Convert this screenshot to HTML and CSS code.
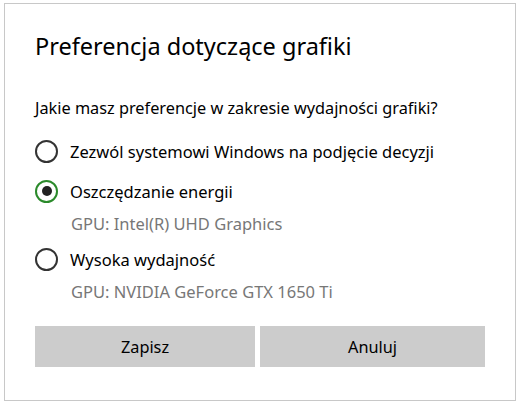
FILE: index.html
```html
<!DOCTYPE html>
<html lang="pl">
<head>
  <meta charset="UTF-8" />
  <title>Preferencja dotyczące grafiki</title>
  <link rel="stylesheet" href="styles.css">
</head>
<body>

<div class="dialog">
  <h2>Preferencja dotyczące grafiki</h2>
  <p class="question">Jakie masz preferencje w zakresie wydajności grafiki?</p>

  <div class="options">
    <label class="option">
      <span class="radio"></span>
      <span class="option-text">Zezwól systemowi Windows na podjęcie decyzji</span>
    </label>

    <label class="option checked">
      <span class="radio"></span>
      <span class="option-text">Oszczędzanie energii</span>
    </label>
    <div class="gpu">GPU: Intel(R) UHD Graphics</div>

    <label class="option">
      <span class="radio"></span>
      <span class="option-text">Wysoka wydajność</span>
    </label>
    <div class="gpu">GPU: NVIDIA GeForce GTX 1650 Ti</div>
  </div>

  <div class="buttons">
    <button class="btn save">Zapisz</button>
    <button class="btn cancel">Anuluj</button>
  </div>
</div>

</body>
</html>
```

FILE: styles.css
```css
body {
  margin: 0;
  font-family: 'Noto Sans', 'Open Sans', sans-serif;
  background: #fff;
  color: #000;
}
.dialog {
  box-sizing: border-box;
  width: 512px;
  height: 398px;
  margin: 3px 0 0 4px;
  border: 1px solid #c8c8c8;
  padding: 0 30px;
}
h2 {
  margin: 25px 0 0;
  font-size: 23.5px;
  font-weight: 400;
  line-height: 34px;
}
.question {
  margin: 34px 0 0;
  font-size: 16.3px;
  line-height: 22px;
}
.options {
  margin-top: 12px;
}
.option {
  display: flex;
  align-items: center;
  height: 40px;
  font-size: 16.5px;
}
.radio {
  box-sizing: border-box;
  width: 23px;
  height: 23px;
  border: 2px solid #333;
  border-radius: 50%;
  margin-right: 12px;
  display: flex;
  align-items: center;
  justify-content: center;
}
.option.checked .radio {
  border-color: #2b8a2b;
}
.option.checked .radio::after {
  content: "";
  width: 10px;
  height: 10px;
  border-radius: 50%;
  background: #222;
}
.gpu {
  padding-left: 36px;
  font-size: 16.5px;
  color: #777;
  line-height: 24px;
  margin: 1px 0 3px;
}
.buttons {
  display: flex;
  gap: 5px;
  margin-top: 22px;
  width: 450px;
}
.btn {
  height: 41px;
  border: none;
  background: #cccccc;
  font-family: inherit;
  font-size: 16.3px;
  color: #000;
  padding: 0;
}
.save {
  width: 220px;
}
.cancel {
  width: 225px;
}
```
